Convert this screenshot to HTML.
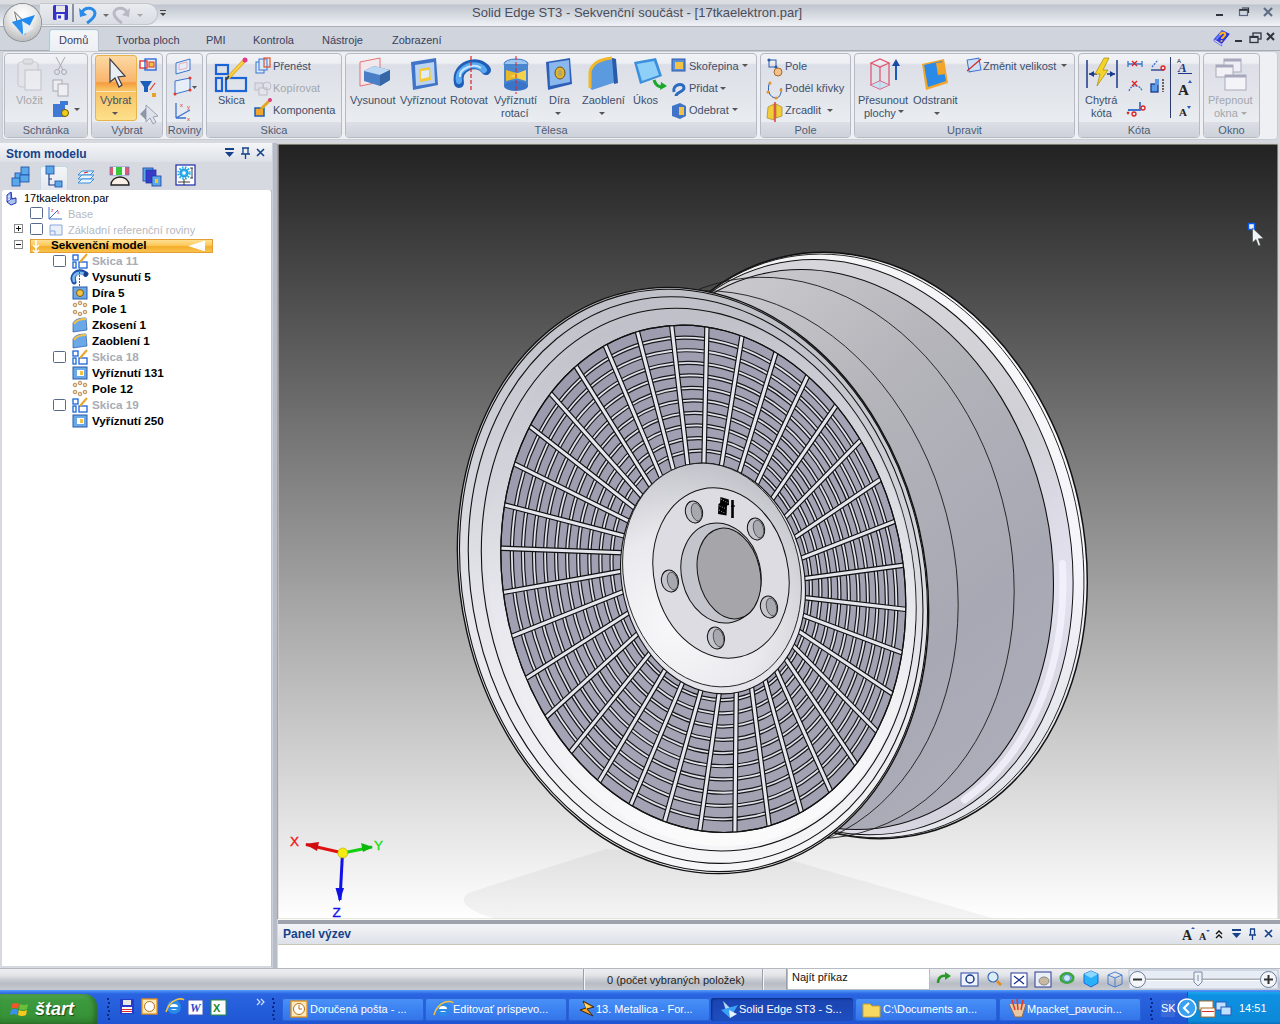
<!DOCTYPE html>
<html><head><meta charset="utf-8">
<style>
*{margin:0;padding:0;box-sizing:border-box}
html,body{width:1280px;height:1024px;overflow:hidden;background:#d4d7de;font-family:"Liberation Sans",sans-serif;font-size:11px;color:#15428b;position:relative}
.a{position:absolute}
svg{overflow:visible}
#title{left:0;top:0;width:1280px;height:27px;background:linear-gradient(#dcdde0 0,#dcdde0 4px,#bfc5ce 5px,#e6e9ee 22px,#eef0f5 25px);border-bottom:1px solid #a9adb5}
#tabs{left:0;top:27px;width:1280px;height:24px;background:#d0d4dc;border-bottom:1px solid #a8acb2}
#rib{left:2px;top:51px;width:1276px;height:89px;background:#eef0f4;border:1px solid #c9ccd2;border-radius:4px}
.grp{position:absolute;height:85px;border:1px solid #b6bac2;border-radius:4px;background:linear-gradient(#f2f3f6 0,#eceef2 11%,#dcdfe7 13%,#e3e6eb 55%,#eef1f4 100%)}
.grp .lbl{position:absolute;left:0;right:0;bottom:0;height:15px;padding-top:1px;background:linear-gradient(#dcdfe6,#cdd1d9);border-radius:0 0 3px 3px;text-align:center;color:#4e5d77;font-size:11px;line-height:15px}
.rt{position:absolute;color:#3d4f6c;font-size:11px;white-space:nowrap;line-height:14px}
.dis{color:#a3a7ae}
#left{left:0;top:140px;width:274px;height:828px;background:#d6d9e0}
#lhead{left:0;top:143px;width:272px;height:19px;background:linear-gradient(#f4f5f7,#dde1e7)}
#tree{left:2px;top:190px;width:269px;height:776px;background:#fff;border-radius:3px 3px 0 0}
.ti{position:absolute;font-size:11px;white-space:nowrap;color:#000;line-height:14px}
#vp{left:278px;top:144px;width:1000px;height:775px;background:linear-gradient(#222222,#ffffff);overflow:hidden}
#panel{left:278px;top:924px;width:1002px;height:44px;background:#fff}
#phead{left:278px;top:924px;width:1002px;height:21px;background:linear-gradient(#f4f5f8,#dde1e8);border-bottom:1px solid #c9c6b8}
#status{left:0;top:968px;width:1280px;height:22px;border-top:1px solid #b4b8c0;background:linear-gradient(#eceef2 0,#e2e4e8 30%,#c4c8cf 55%,#b8bcc4 70%,#c8cbd1 100%)}
#task{left:0;top:990px;width:1280px;height:34px;background:linear-gradient(#5a9af8 0,#3a80f0 2px,#2a64e0 4px,#245edb 50%,#1f55d2 100%)}
.tb{position:absolute;top:998px;width:142px;height:23px;border-radius:3px;background:linear-gradient(#4a92f8,#3c82f2 50%,#3474e8);color:#fff;font-size:11px;padding-left:28px;line-height:23px;white-space:nowrap;box-shadow:inset 0 0 0 1px #2a62d8}
.tb.act{background:linear-gradient(#1a44b0,#1e4ec0);box-shadow:inset 1px 1px 2px #0a2a80}
</style></head><body>
<!-- TITLE BAR -->
<div id="title" class="a"></div>
<div class="a" style="left:40px;top:3px;width:118px;height:22px;border-radius:0 11px 11px 0;background:linear-gradient(#e9ebef,#d9dde4);border:1px solid #c3c7ce;border-left:none"></div>
<svg class="a" style="left:52px;top:4px" width="120" height="20">
 <rect x="1" y="1" width="15" height="15" fill="#3434c8" rx="1.5"/><rect x="4" y="1.5" width="9" height="6.5" fill="#e8e8e8"/><rect x="4.5" y="10" width="8" height="6" fill="#f0f0f0"/><rect x="6" y="11.5" width="3" height="3" fill="#3434c8"/>
 <line x1="21" y1="0" x2="21" y2="18" stroke="#2a3a5a" stroke-width="1"/>
 <path d="M30 10 C 30 3, 42 2, 43 9 C 43 14, 38 17, 35 19" stroke="#2a8ae8" stroke-width="3" fill="none"/><polygon points="27,4 28,13 35,11" fill="#2a8ae8"/>
 <polygon points="51,10 57,10 54,13" fill="#6d6d6d"/>
 <path d="M75 10 C 75 3, 63 2, 62 9 C 62 14, 67 17, 70 19" stroke="#b9b9c4" stroke-width="3" fill="none"/><polygon points="78,4 77,13 70,11" fill="#b9b9c4"/>
 <polygon points="85,10 91,10 88,13" fill="#a8a8a8"/>
 <rect x="108" y="6" width="6" height="1" fill="#444"/><polygon points="108,9 114,9 111,12" fill="#444"/>
</svg>
<div class="a" style="left:472px;top:5px;width:340px;font-size:13px;color:#4a4d5c;white-space:nowrap;line-height:16px">Solid Edge ST3 - Sekvenční součást - [17tkaelektron.par]</div>
<svg class="a" style="left:1210px;top:4px" width="70" height="16">
 <rect x="6" y="10" width="7" height="2" fill="#2f3440"/>
 <rect x="29.5" y="5.5" width="8" height="6" fill="none" stroke="#586480" stroke-width="1.2"/><rect x="29.5" y="5" width="8" height="1.8" fill="#2f3440"/><path d="M32 4 L38.5 4 L38.5 9" stroke="#2f3440" stroke-width="1.2" fill="none"/>
 <path d="M54 4 L62 12 M62 4 L54 12" stroke="#5f6e86" stroke-width="2.2"/>
</svg>
<!-- TABS -->
<div id="tabs" class="a"></div>
<div class="a" style="left:49px;top:29px;width:50px;height:23px;border:1px solid #b8c4d0;border-bottom:none;border-radius:3px 3px 0 0;background:linear-gradient(#f6f7f9,#eceef2);box-shadow:inset 0 0 0 1px #e0f4fa"></div>
<div class="rt" style="left:59px;top:33px;color:#3b3f5e;font-size:11px">Domů</div>
<div class="rt" style="left:116px;top:33px;color:#3b3f5e;font-size:11px">Tvorba ploch</div>
<div class="rt" style="left:206px;top:33px;color:#3b3f5e;font-size:11px">PMI</div>
<div class="rt" style="left:253px;top:33px;color:#3b3f5e;font-size:11px">Kontrola</div>
<div class="rt" style="left:322px;top:33px;color:#3b3f5e;font-size:11px">Nástroje</div>
<div class="rt" style="left:392px;top:33px;color:#3b3f5e;font-size:11px">Zobrazení</div>
<div class="a" style="left:4px;top:4px;width:37px;height:37px;border-radius:50%;background:radial-gradient(circle at 50% 30%,#ffffff 0,#ececec 40%,#bdbdbd 80%,#9a9a9a 100%);box-shadow:0 0 0 1px #8d9097,0 1px 1px #c8ccd2"></div>
<svg class="a" style="left:4px;top:4px" width="37" height="37"><polygon points="10,7 20,17 13,20" fill="#5a5a5a"/><polygon points="11,9 19,17 14,19" fill="#f4f4f4"/><polygon points="8,18 31,11 21,31" fill="#1e8af0"/><polygon points="18,17 30,24 19,31" fill="#e6eef6"/><polygon points="18,17 8,18 19,31" fill="#2a90f0"/></svg>
<svg class="a" style="left:1212px;top:29px" width="68" height="18">
 <polygon points="2,10 10,1 18,5 10,15" fill="#2a36d8"/><polygon points="2,10 10,15 10,17 2,12" fill="#e8ecff" stroke="#3a48e0" stroke-width="0.7"/><polygon points="10,15 18,5 18,7 10,17" fill="#c8d0ff"/><polygon points="3,10 10,2 12,3 5,11" fill="#6a7af8"/><path d="M8 6 C 9 3, 14 3, 13 6 C 12 8, 10 8, 10 10" stroke="#ffb020" stroke-width="2.2" fill="none"/><circle cx="9.5" cy="12" r="1.1" fill="#ffb020"/>
 <rect x="23" y="11" width="7" height="2" fill="#2f3440"/>
 <rect x="41" y="4" width="8" height="6" fill="none" stroke="#2f3440" stroke-width="1.3"/><rect x="38" y="7.5" width="8" height="6" fill="#d0d4dc" stroke="#2f3440" stroke-width="1.3"/><rect x="38" y="7.5" width="8" height="1.5" fill="#2f3440"/>
 <path d="M55 4 L62 11 M62 4 L55 11" stroke="#2f3440" stroke-width="2"/>
</svg>
<!-- RIBBON -->
<div id="rib" class="a"></div>
<div class="grp" style="left:4px;top:53px;width:84px"><div class="lbl">Schránka</div></div>
<div class="grp" style="left:91px;top:53px;width:72px"><div class="lbl">Vybrat</div></div>
<div class="grp" style="left:166px;top:53px;width:37px"><div class="lbl">Roviny</div></div>
<div class="grp" style="left:206px;top:53px;width:136px"><div class="lbl">Skica</div></div>
<div class="grp" style="left:345px;top:53px;width:412px"><div class="lbl">Tělesa</div></div>
<div class="grp" style="left:760px;top:53px;width:91px"><div class="lbl">Pole</div></div>
<div class="grp" style="left:854px;top:53px;width:221px"><div class="lbl">Upravit</div></div>
<div class="grp" style="left:1078px;top:53px;width:122px"><div class="lbl">Kóta</div></div>
<div class="grp" style="left:1203px;top:53px;width:57px"><div class="lbl">Okno</div></div>
<!-- Vybrat highlighted button -->
<div class="a" style="left:95px;top:55px;width:42px;height:66px;border:1px solid #e8b44a;border-radius:3px;background:linear-gradient(#fcd9a4 0,#f9b56c 40%,#f59b3c 42%,#f8c060 52%,#fde08c 100%)"></div>
<div class="a" style="left:96px;top:91px;width:40px;height:1px;background:#fde6c0"></div>
<svg class="a" style="left:0;top:50px" width="1280" height="75">
 <!-- Schranka -->
 <g opacity="0.55"><rect x="18" y="12" width="20" height="25" rx="3" fill="#e6e6ea" stroke="#b2b2ba"/><rect x="23" y="9" width="10" height="5" rx="2" fill="#d0d0d6" stroke="#a9a9b0"/><rect x="25" y="20" width="16" height="20" fill="#f4f4f6" stroke="#a9a9b0"/></g>
 <g stroke="#9a9aa6" fill="none" opacity="0.8"><circle cx="57" cy="22" r="2.5"/><circle cx="64" cy="22" r="2.5"/><path d="M56 7 L63 20 M65 7 L58 20"/></g>
 <g stroke="#a4a4ae" fill="#f0f0f4" opacity="0.9"><rect x="53" y="30" width="9" height="11"/><rect x="58" y="34" width="10" height="12"/></g>
 <rect x="53" y="54" width="12" height="13" fill="#3f79d6"/><rect x="60" y="51" width="8" height="4" fill="#3f79d6"/><circle cx="65" cy="63" r="3.5" fill="#f1cd1b" stroke="#6f5a00"/>
 <polygon points="74,58 80,58 77,61" fill="#555"/>
 <!-- Vybrat -->
 <path d="M110 9 L110 32 L115 28 L119 37 L122 35 L118 27 L125 26 Z" fill="#e9eef2" stroke="#3d3d48" stroke-width="1.2"/>
 <polygon points="112,62 118,62 115,65" fill="#555"/>
 <rect x="140" y="11" width="7" height="7" fill="#fff" stroke="#e23a2a" stroke-width="1.4"/><rect x="145" y="9" width="11" height="11" fill="none" stroke="#2460d8" stroke-width="1.3"/><rect x="149" y="12" width="5" height="5" fill="#f3c244" stroke="#e23a2a"/>
 <path d="M140 31 L152 31 L148 37 L148 42 L144 42 L144 37 Z" fill="#1a5fb8"/><path d="M150 40 L155 33" stroke="#e23a2a" stroke-width="1.2"/><rect x="152" y="43" width="4" height="4" fill="#e8a028"/>
 <path d="M146 55 L146 72 L150 68 L153 74 L156 72 L153 67 L158 66 Z" fill="#dfe2ea" stroke="#9aa0b0"/><path d="M140 64 L146 58 L146 70 Z" fill="#8c96a8"/>
 <!-- Roviny -->
 <polygon points="176,13 190,9 190,20 176,24" fill="#e6eefa" stroke="#3a74d0"/><polygon points="179,14 187,12 187,18 179,20" fill="none" stroke="#e6a0a8" stroke-width="0.8"/>
 <polygon points="175,31 190,28 190,40 175,44" fill="#e6eefa" stroke="#3a74d0"/><circle cx="175" cy="44" r="1.5" fill="#e23a2a"/><circle cx="190" cy="28" r="1.5" fill="#e23a2a"/><circle cx="190" cy="40" r="1.5" fill="#e23a2a"/><polygon points="192,36 197,36 194.5,39" fill="#555"/>
 <path d="M176 68 L176 53 M176 68 L190 60 M176 68 L186 68" stroke="#3a74d0" stroke-width="1.3" fill="none"/><text x="180" y="57" font-size="6" fill="#d23a2a">x</text><text x="187" y="71" font-size="6" fill="#d23a2a">x</text><text x="187" y="59" font-size="6" fill="#d23a2a">y</text>
 <!-- Skica -->
 <g stroke="#1a64d8" stroke-width="2.2" fill="none"><rect x="216" y="15" width="12" height="9"/><rect x="216" y="28" width="6" height="13"/><rect x="226" y="28" width="20" height="13"/></g>
 <path d="M228 28 L244 11" stroke="#e2a81e" stroke-width="4"/><path d="M228 28 L244 11" stroke="#f7d34a" stroke-width="2"/><circle cx="245" cy="10" r="2.5" fill="#e23a8a"/><path d="M226 30 L229 26" stroke="#333" stroke-width="1.5"/>
 <g fill="#dbe8f8" stroke="#3a74d0"><rect x="256" y="12" width="8" height="11"/><rect x="259" y="9" width="8" height="11"/></g><rect x="264" y="8" width="6" height="9" fill="none" stroke="#e0502a" stroke-width="1.2"/>
 <g opacity="0.45"><rect x="255" y="33" width="8" height="7" fill="#d8d8de" stroke="#9090a0"/><rect x="259" y="38" width="8" height="7" fill="#e8e8ee" stroke="#9090a0"/><circle cx="267" cy="36" r="4" fill="none" stroke="#9090a0"/></g>
 <rect x="255" y="58" width="9" height="8" fill="#f3a72a" stroke="#1a5fb8" stroke-width="1.5"/><path d="M261 59 L270 50" stroke="#e2a81e" stroke-width="3"/><circle cx="270" cy="50" r="2" fill="#e23a8a"/>
 <!-- Telesa -->
 <polygon points="360,12 380,8 380,32 360,36" fill="#f4e8ec" stroke="#e0454a" stroke-width="0.8" opacity="0.9"/>
 <polygon points="364,21 374,16 390,20 390,30 380,36 364,31" fill="#4a7fc8"/><polygon points="364,21 374,16 390,20 380,25" fill="#bcd8f4"/><polygon points="380,25 390,20 390,30 380,36" fill="#3466a8"/>
 <polygon points="411,12 436,8 438,35 413,40" fill="#3f74c8"/><polygon points="415,15 434,12 435,33 416,36" fill="#bcd4f0"/><polygon points="419,19 430,17 431,30 420,32" fill="#f5c93a"/><polygon points="421,21 429,20 429,27 421,29" fill="#e2ecf8"/>
 <path d="M459 33 C 455 16, 478 8, 486 20" stroke="#1f5fb8" stroke-width="10" fill="none" stroke-linecap="round"/><path d="M459 31 C 456 17, 477 10, 484 20" stroke="#5aa8f0" stroke-width="6" fill="none" stroke-linecap="round"/><path d="M460 27 C 459 18, 474 13, 481 18" stroke="#c8e6fc" stroke-width="2" fill="none"/><line x1="471" y1="6" x2="471" y2="42" stroke="#e02020" stroke-width="1.2" stroke-dasharray="4,2"/>
 <polygon points="555,62 561,62 558,65" fill="#555"/><polygon points="599,62 605,62 602,65" fill="#555"/>
 <ellipse cx="516" cy="14" rx="12" ry="5" fill="#9cc6ee" stroke="#3a74c8"/><rect x="504" y="14" width="24" height="22" fill="#4a86d0"/><ellipse cx="516" cy="36" rx="12" ry="5" fill="#3a74c8"/><polygon points="506,20 526,26 506,31" fill="#e8b82a"/><polygon points="526,20 510,26 526,31" fill="#f6d24a"/><line x1="516" y1="6" x2="516" y2="44" stroke="#e02020" stroke-dasharray="4,2"/>
 <polygon points="546,12 570,8 572,34 548,40" fill="#2e5fb8"/><polygon points="549,13 569,10 570,32 550,36" fill="#8ab8ec"/><ellipse cx="560" cy="23" rx="5" ry="6" fill="#e8b82a" stroke="#6b5212"/><ellipse cx="560" cy="23" rx="2.5" ry="3.5" fill="#bca85a"/>
 <path d="M590 38 L590 22 C 592 12, 602 9, 612 8 L 614 8 L 616 32 L 592 40 Z" fill="#5c9ae0"/><path d="M590 38 L590 22 C 592 12, 602 9, 612 8" stroke="#f2b82a" stroke-width="3" fill="none"/><polygon points="612,8 616,9 618,33 614,34" fill="#2a5aa8"/>
 <polygon points="634,12 656,8 662,26 640,34" fill="#3a90dc"/><polygon points="637,14 654,11 659,25 642,31" fill="#8fd0f8"/><path d="M654 30 C 656 36, 660 38, 664 36" stroke="#1aa82a" stroke-width="3" fill="none"/><polygon points="661,32 667,36 660,40" fill="#1aa82a"/>
 <rect x="672" y="9" width="13" height="12" fill="#5a8fd8" stroke="#2a5aa8"/><rect x="675" y="12" width="8" height="7" fill="#f3c244"/>
 <polygon points="742,14 748,14 745,17" fill="#555"/>
 <path d="M674 42 C 672 34, 684 32, 684 38 C 684 42, 676 42, 676 46" stroke="#2a6ac0" stroke-width="3" fill="none"/>
 <polygon points="720,37 726,37 723,40" fill="#555"/>
 <polygon points="672,56 680,53 686,56 686,66 680,69 672,66" fill="#3f74c8"/><rect x="679" y="57" width="5" height="8" fill="#f3c244"/>
 <polygon points="732,58 738,58 735,61" fill="#555"/>
 <!-- Pole -->
 <g fill="none" stroke="#2a5aa8"><rect x="769" y="10" width="7" height="7"/></g><circle cx="769" cy="10" r="1.6" fill="#2a5aa8"/><circle cx="776" cy="17" r="1.6" fill="#2a5aa8"/><circle cx="778" cy="22" r="4" fill="#f3c28a" stroke="#a86a2a"/>
 <path d="M770 32 C 766 40, 770 48, 776 48 C 780 48, 782 42, 781 38" stroke="#2a5aa8" fill="none"/><circle cx="770" cy="33" r="1.5" fill="#e8902a"/><circle cx="768" cy="42" r="1.5" fill="#e8902a"/><circle cx="776" cy="48" r="1.5" fill="#e8902a"/><circle cx="781" cy="40" r="1.5" fill="#e8902a"/>
 <path d="M774 54 L768 57 L767 68 L774 70 Z" fill="#f1cd3a" stroke="#9a7a10" stroke-width="0.6"/><path d="M776 54 L782 57 L782 66 L776 68 Z" fill="#f1cd3a" stroke="#9a7a10" stroke-width="0.6"/><line x1="775" y1="52" x2="775" y2="72" stroke="#e02020" stroke-width="1.3"/>
 <polygon points="827,59 833,59 830,62" fill="#555"/>
 <!-- Upravit -->
 <g stroke="#e0506a" fill="none" stroke-width="1.2"><polygon points="871,13 880,9 889,13 880,17"/><polygon points="871,35 880,31 889,35 880,39"/><line x1="871" y1="13" x2="871" y2="35"/><line x1="889" y1="13" x2="889" y2="35"/><line x1="880" y1="17" x2="880" y2="39"/></g><polygon points="871,35 880,31 889,35 880,39" fill="#bfe4f8" opacity="0.8"/>
 <line x1="896" y1="30" x2="896" y2="14" stroke="#1a5ab8" stroke-width="2"/><polygon points="892,16 900,16 896,9" fill="#1a4aa8"/>
 <polygon points="898,60 904,60 901,63" fill="#555"/>
 <polygon points="922,14 944,9 948,33 926,40" fill="#f3a52a"/><polygon points="924,15 942,11 946,31 928,37" fill="#2a8ae8"/><polygon points="936,13 944,12 946,24 938,25" fill="#f3a52a"/>
 <polygon points="934,62 940,62 937,65" fill="#555"/>
 <rect x="968" y="9" width="12" height="12" fill="#cfe0f6" stroke="#3a74d0" transform="rotate(-10 974 15)"/><path d="M967 21 L981 9" stroke="#d02a2a" stroke-width="1.2"/>
 <polygon points="1061,14 1067,14 1064,17" fill="#555"/>
 <!-- Kota -->
 <line x1="1087" y1="10" x2="1087" y2="38" stroke="#1a3a88" stroke-width="1.5"/><line x1="1117" y1="10" x2="1117" y2="38" stroke="#1a3a88" stroke-width="1.5"/><path d="M1089 24 L1097 24 M1107 24 L1115 24" stroke="#1a3a88" stroke-width="1.5"/><polygon points="1089,24 1094,21 1094,27" fill="#1a3a88"/><polygon points="1115,24 1110,21 1110,27" fill="#1a3a88"/>
 <polygon points="1104,8 1109,8 1103,20 1108,20 1097,36 1100,24 1095,24" fill="#f3d22a" stroke="#a88a10" stroke-width="0.7"/>
 <g stroke-width="1.3" fill="none"><path d="M1128 11 L1128 17 M1142 11 L1142 17 M1128 14 L1142 14" stroke="#3a74d0"/><path d="M1132 11 L1137 16 M1137 11 L1132 16" stroke="#e02020"/>
 <path d="M1151 20 L1164 20" stroke="#1a3a88"/><path d="M1152 17 L1158 10" stroke="#3a74d0" stroke-dasharray="2,1"/><circle cx="1163" cy="18" r="2" stroke="#e02020"/>
 <path d="M1129 41 C 1131 34, 1140 34, 1142 41" stroke="#3a74d0" stroke-dasharray="2,1"/><path d="M1132 31 L1137 36 M1137 31 L1132 36" stroke="#e02020"/>
 <rect x="1151" y="34" width="7" height="8" fill="#5a9ae8" stroke="#1a3a88"/><rect x="1155" y="29" width="4" height="6" fill="#5a9ae8"/><path d="M1163 29 L1163 42" stroke="#222" stroke-dasharray="2,1"/>
 <path d="M1128 60 L1140 60 L1140 52" stroke="#3a74d0" stroke-width="1.8"/><circle cx="1143" cy="58" r="2" stroke="#e02020"/><circle cx="1134" cy="64" r="2" stroke="#e02020"/><path d="M1127 62 L1129 64 M1129 62 L1127 64" stroke="#e02020"/></g>
 <line x1="1170.5" y1="7" x2="1170.5" y2="68" stroke="#2a3a6a" stroke-width="1"/>
 <text x="1178" y="22" font-family="Liberation Serif" font-weight="bold" font-style="italic" font-size="13" fill="#1a3a88">A</text><text x="1177" y="13" font-size="6" fill="#111">A</text><line x1="1178" y1="23.5" x2="1192" y2="23.5" stroke="#1a3a88"/>
 <text x="1178" y="45" font-family="Liberation Serif" font-weight="bold" font-size="15" fill="#222">A</text><polygon points="1188,33 1192,33 1190,30" fill="#2a5ab8"/>
 <text x="1179" y="66" font-family="Liberation Serif" font-weight="bold" font-size="11" fill="#222">A</text><polygon points="1187,56 1191,56 1189,59" fill="#2a5ab8"/>
 <!-- Okno -->
 <g><rect x="1224" y="9" width="17" height="13" fill="#eeeef4" stroke="#aaaabc"/><rect x="1224" y="9" width="17" height="2.5" fill="#a8a8bc"/><rect x="1216" y="15" width="17" height="12" fill="#f2f2f6" stroke="#aaaabc"/><rect x="1216" y="15" width="17" height="2.5" fill="#a8a8bc"/><rect x="1225" y="25" width="21" height="15" fill="#f4f4f8" stroke="#aaaabc"/><rect x="1225" y="25" width="21" height="2.5" fill="#a8a8bc"/></g>
 <polygon points="1241,62 1247,62 1244,65" fill="#aaa"/>
</svg>
<div class="rt dis" style="left:16px;top:93px;font-size:11px">Vložit</div>
<div class="rt" style="left:100px;top:93px;font-size:11px">Vybrat</div>
<div class="rt" style="left:218px;top:93px;font-size:11px">Skica</div>
<div class="rt" style="left:273px;top:59px;font-size:11px">Přenést</div>
<div class="rt dis" style="left:273px;top:81px;font-size:11px">Kopírovat</div>
<div class="rt" style="left:273px;top:103px;font-size:11px">Komponenta</div>
<div class="rt" style="left:350px;top:93px;font-size:11px">Vysunout</div>
<div class="rt" style="left:400px;top:93px;font-size:11px">Vyříznout</div>
<div class="rt" style="left:450px;top:93px;font-size:11px">Rotovat</div>
<div class="rt" style="left:494px;top:93px">Vyříznutí</div><div class="rt" style="left:501px;top:106px">rotací</div>
<div class="rt" style="left:549px;top:93px;font-size:11px">Díra</div>
<div class="rt" style="left:582px;top:93px;font-size:11px">Zaoblení</div>
<div class="rt" style="left:633px;top:93px;font-size:11px">Úkos</div>
<div class="rt" style="left:689px;top:59px;font-size:11px">Skořepina</div>
<div class="rt" style="left:689px;top:81px;font-size:11px">Přidat</div>
<div class="rt" style="left:689px;top:103px;font-size:11px">Odebrat</div>
<div class="rt" style="left:785px;top:59px;font-size:11px">Pole</div>
<div class="rt" style="left:785px;top:81px;font-size:11px">Podél křivky</div>
<div class="rt" style="left:785px;top:103px;font-size:11px">Zrcadlit</div>
<div class="rt" style="left:858px;top:93px">Přesunout</div><div class="rt" style="left:864px;top:106px">plochy</div>
<div class="rt" style="left:913px;top:93px;font-size:11px">Odstranit</div>
<div class="rt" style="left:983px;top:59px;font-size:11px">Změnit velikost</div>
<div class="rt" style="left:1085px;top:93px">Chytrá</div><div class="rt" style="left:1091px;top:106px">kóta</div>
<div class="rt dis" style="left:1208px;top:93px">Přepnout</div><div class="rt dis" style="left:1214px;top:106px">okna</div>
<!-- LEFT PANEL -->
<div id="left" class="a"></div>
<div id="lhead" class="a"></div>
<div class="a" style="left:6px;top:147px;font-size:12px;font-weight:bold;color:#15428b;white-space:nowrap">Strom modelu</div>
<svg class="a" style="left:220px;top:146px" width="50" height="16">
 <rect x="5" y="2" width="9" height="2" fill="#15428b"/><polygon points="5,6 14,6 9.5,11" fill="#15428b"/>
 <path d="M22 2 L29 2 M23 2 L23 8 M28 2 L28 8 M21 8 L30 8 M25.5 8 L25.5 13" stroke="#15428b" stroke-width="1.3" fill="none"/>
 <path d="M37 3 L44 10 M44 3 L37 10" stroke="#15428b" stroke-width="1.6"/>
</svg>
<div class="a" style="left:40px;top:166px;width:28px;height:25px;border:1px solid #c4d8e6;border-bottom:none;border-radius:3px 3px 0 0;background:linear-gradient(#f3f5f8,#e2e6ec)"></div>
<svg class="a" style="left:0;top:162px" width="210" height="28">
 <g fill="#5aa8e8" stroke="#1a4aa8" stroke-width="0.8"><rect x="15" y="11" width="8" height="8"/><rect x="21" y="5" width="8" height="8"/><rect x="12" y="16" width="8" height="8"/><rect x="20" y="13" width="9" height="7"/></g>
 <rect x="46" y="4" width="8" height="8" fill="#5aa8e8" stroke="#1a4aa8" stroke-width="0.8"/><path d="M49 12 L49 23 L56 23 M49 17 L52 17" stroke="#1a3a88" stroke-width="1.2" fill="none"/><rect x="55" y="19" width="7" height="6" fill="#5aa8e8" stroke="#1a4aa8" stroke-width="0.8"/>
 <g fill="#eaf4fc" stroke="#3a90dc"><polygon points="78,13 90,13 94,9 82,9"/><polygon points="78,17 90,17 94,13 82,13"/><polygon points="78,21 90,21 94,17 82,17"/></g><path d="M84 11 L88 10" stroke="#e02020"/>
 <rect x="110" y="5" width="19" height="8" fill="#e8566a" stroke="#3a74c8" stroke-width="0.6"/><rect x="116" y="5" width="6" height="8" fill="#38c838"/><rect x="113" y="5" width="3" height="8" fill="#f4f4f4"/><rect x="122" y="5" width="3" height="8" fill="#f4f4f4"/><path d="M111 23 A 9 8 0 0 1 129 23 Z" fill="#fbf0e8" stroke="#222" stroke-width="1.3"/>
 <g fill="#5aa8e8" stroke="#1a3aa8" stroke-width="0.8"><rect x="143" y="6" width="10" height="13"/><rect x="146" y="8" width="10" height="13" fill="#3a3ac8"/><rect x="152" y="14" width="9" height="10" fill="#5aa8e8"/></g><rect x="155" y="17" width="3" height="4" fill="#f3c244"/>
 <rect x="176" y="3" width="19" height="20" fill="#fff" stroke="#1a2aa8" stroke-width="1.2"/><circle cx="184" cy="11" r="5.5" fill="none" stroke="#26b4f0" stroke-width="2.5" stroke-dasharray="1.6,1.3"/><circle cx="184" cy="11" r="4" fill="#26b4f0" stroke="#1a6ac8" stroke-width="0.6"/><circle cx="184" cy="11" r="1.8" fill="#fff"/><path d="M184 17 L184 23 M178 20 L190 20 M192 6 L192 16 M190 6 L193 6 M190 16 L193 16" stroke="#111" stroke-width="0.8"/>
</svg>
<div id="tree" class="a"></div>
<svg class="a" style="left:0;top:190px" width="220" height="240">
 <!-- root icon -->
 <path d="M7 5 L11 2 L12 9 L16 8 L16 13 L11 15 L7 12 Z" fill="#a8c4ee" stroke="#2a3ab8" stroke-width="1"/><path d="M11 2 L11 9 L7 12 M11 9 L16 8" stroke="#2a3ab8" stroke-width="0.8" fill="none"/><path d="M8 7 L10 6 M8 10 L10 9" stroke="#fff" stroke-width="0.8"/>
 <!-- Base row y 23 -->
 <rect x="30.5" y="17.5" width="12" height="11" fill="#fff" stroke="#5a6a8a" rx="1"/>
 <path d="M49 29 L49 17 M49 29 L62 29 M49 29 L58 20" stroke="#3a74d0" stroke-width="1" fill="none"/><text x="51" y="22" font-size="5" fill="#d02a6a">z</text><text x="57" y="24" font-size="5" fill="#d02a6a">x</text>
 <!-- Zakladni y 39 -->
 <rect x="14.5" y="34.5" width="8" height="8" fill="#fff" stroke="#8a8a8a"/><path d="M16 38.5 L21 38.5 M18.5 36 L18.5 41" stroke="#111"/>
 <rect x="30.5" y="33.5" width="12" height="11" fill="#fff" stroke="#5a6a8a" rx="1"/>
 <path d="M50 35 L62 35 L62 45 L50 45 Z" fill="#eaf0fa" stroke="#88a8d8"/><path d="M50 41 L55 41 L55 45" stroke="#88a8d8" fill="none"/>
 <!-- Sekvencni y 55 -->
 <rect x="14.5" y="50.5" width="8" height="8" fill="#fff" stroke="#8a8a8a"/><path d="M16 54.5 L21 54.5" stroke="#111"/>
</svg>
<div class="a" style="left:30px;top:239px;width:183px;height:14px;background:linear-gradient(#ffdf93 0,#fcc95a 45%,#f5ad2c 55%,#f8c24c 100%);border:1px solid #e4a037"></div>
<svg class="a" style="left:0;top:190px" width="220" height="240">
 <path d="M36 50 L36 63 M33 55 L36 58 L39 55 M33 60 L36 63 L39 60" stroke="#fff" stroke-width="1.5" fill="none"/>
 <polygon points="188,56 204,51 204,61" fill="#fff"/><rect x="203" y="51" width="2" height="10" fill="#fff"/>
 <!-- children icons -->
 <g id="chk"><rect x="53.5" y="65.5" width="12" height="11" fill="#fff" stroke="#5a6a8a" rx="1"/></g>
 <g><rect x="73" y="65" width="5" height="5" fill="none" stroke="#1a64d8" stroke-width="1.3"/><rect x="73" y="72" width="3" height="6" fill="none" stroke="#1a64d8" stroke-width="1.3"/><rect x="79" y="72" width="8" height="6" fill="none" stroke="#1a64d8" stroke-width="1.3"/><path d="M80 72 L87 64" stroke="#e8a82a" stroke-width="2"/></g>
 <path d="M74 92 C 71 86, 76 81, 82 82 L 86 84" stroke="#1f4fa8" stroke-width="5" fill="none" stroke-linecap="round"/><path d="M74 91 C 72 86, 76 82, 82 83 L 85 84.5" stroke="#7ab8f0" stroke-width="2.6" fill="none" stroke-linecap="round"/><ellipse cx="85.5" cy="84.5" rx="2" ry="2.6" fill="#1a3a88"/><line x1="79.5" y1="79" x2="79.5" y2="96" stroke="#e02020" stroke-dasharray="2,1"/>
 <rect x="73" y="97" width="14" height="12" fill="#6aa8e8" stroke="#2a5aa8"/><circle cx="80" cy="103" r="3.5" fill="#f3c244" stroke="#7a5a10"/>
 <g fill="#f3d8b8" stroke="#9a6a2a" stroke-width="0.7"><circle cx="75" cy="115" r="1.8"/><circle cx="80" cy="113" r="1.8"/><circle cx="85" cy="115" r="1.8"/><circle cx="75" cy="122" r="1.8"/><circle cx="80" cy="124" r="1.8"/><circle cx="85" cy="122" r="1.8"/></g>
 <path d="M73 142 L73 133 C 75 129, 80 128, 86 128 L87 140 Z" fill="#6aa8e8" stroke="#2a5aa8" stroke-width="0.7"/><path d="M74 134 C 76 130, 80 129, 86 129" stroke="#f3c244" stroke-width="2" fill="none"/>
 <path d="M73 158 L73 149 C 75 145, 80 144, 86 144 L87 156 Z" fill="#6aa8e8" stroke="#2a5aa8" stroke-width="0.7"/><path d="M74 150 C 76 146, 80 145, 86 145" stroke="#f3c244" stroke-width="2" fill="none"/>
 <rect x="53.5" y="161.5" width="12" height="11" fill="#fff" stroke="#5a6a8a" rx="1"/>
 <g><rect x="73" y="161" width="5" height="5" fill="none" stroke="#1a64d8" stroke-width="1.3"/><rect x="73" y="168" width="3" height="6" fill="none" stroke="#1a64d8" stroke-width="1.3"/><rect x="79" y="168" width="8" height="6" fill="none" stroke="#1a64d8" stroke-width="1.3"/><path d="M80 168 L87 160" stroke="#e8a82a" stroke-width="2"/></g>
 <rect x="73" y="177" width="14" height="12" fill="#6aa8e8" stroke="#2a5aa8"/><rect x="77" y="180" width="7" height="6" fill="#fff"/><rect x="80" y="181" width="3" height="4" fill="#f3c244"/>
 <g fill="#f3d8b8" stroke="#9a6a2a" stroke-width="0.7"><circle cx="75" cy="195" r="1.8"/><circle cx="80" cy="193" r="1.8"/><circle cx="85" cy="195" r="1.8"/><circle cx="75" cy="202" r="1.8"/><circle cx="80" cy="204" r="1.8"/><circle cx="85" cy="202" r="1.8"/></g>
 <rect x="53.5" y="209.5" width="12" height="11" fill="#fff" stroke="#5a6a8a" rx="1"/>
 <g><rect x="73" y="209" width="5" height="5" fill="none" stroke="#1a64d8" stroke-width="1.3"/><rect x="73" y="216" width="3" height="6" fill="none" stroke="#1a64d8" stroke-width="1.3"/><rect x="79" y="216" width="8" height="6" fill="none" stroke="#1a64d8" stroke-width="1.3"/><path d="M80 216 L87 208" stroke="#e8a82a" stroke-width="2"/></g>
 <rect x="73" y="225" width="14" height="12" fill="#6aa8e8" stroke="#2a5aa8"/><rect x="77" y="228" width="7" height="6" fill="#fff"/><rect x="80" y="229" width="3" height="4" fill="#f3c244"/>
</svg>
<div class="ti" style="left:24px;top:191px">17tkaelektron.par</div>
<div class="ti" style="left:68px;top:207px;color:#b4b8c0">Base</div>
<div class="ti" style="left:68px;top:223px;color:#b4b8c0">Základní referenční roviny</div>
<div class="ti" style="left:51px;top:238px;font-weight:bold;font-size:11.7px">Sekvenční model</div>
<div class="ti" style="left:92px;top:254px;font-weight:bold;font-size:11.7px;color:#a8acb4">Skica 11</div>
<div class="ti" style="left:92px;top:270px;font-weight:bold;font-size:11.7px">Vysunutí 5</div>
<div class="ti" style="left:92px;top:286px;font-weight:bold;font-size:11.7px">Díra 5</div>
<div class="ti" style="left:92px;top:302px;font-weight:bold;font-size:11.7px">Pole 1</div>
<div class="ti" style="left:92px;top:318px;font-weight:bold;font-size:11.7px">Zkosení 1</div>
<div class="ti" style="left:92px;top:334px;font-weight:bold;font-size:11.7px">Zaoblení 1</div>
<div class="ti" style="left:92px;top:350px;font-weight:bold;font-size:11.7px;color:#a8acb4">Skica 18</div>
<div class="ti" style="left:92px;top:366px;font-weight:bold;font-size:11.7px">Vyříznutí 131</div>
<div class="ti" style="left:92px;top:382px;font-weight:bold;font-size:11.7px">Pole 12</div>
<div class="ti" style="left:92px;top:398px;font-weight:bold;font-size:11.7px;color:#a8acb4">Skica 19</div>
<div class="ti" style="left:92px;top:414px;font-weight:bold;font-size:11.7px">Vyříznutí 250</div>
<svg class="a" style="left:0;top:0" width="1280" height="1024" viewBox="0 0 1280 1024">
<defs>
<linearGradient id="bg" x1="0" y1="144" x2="0" y2="919" gradientUnits="userSpaceOnUse"><stop offset="0" stop-color="#222"/><stop offset="1" stop-color="#fff"/></linearGradient>
<linearGradient id="barrel" x1="700" y1="250" x2="1000" y2="850" gradientUnits="userSpaceOnUse"><stop offset="0" stop-color="#d0d0d4"/><stop offset="0.35" stop-color="#b4b4ba"/><stop offset="0.7" stop-color="#a8a8b4"/><stop offset="1" stop-color="#b0b0bc"/></linearGradient>
<linearGradient id="flange" x1="800" y1="250" x2="1080" y2="800" gradientUnits="userSpaceOnUse"><stop offset="0" stop-color="#f4f4f6"/><stop offset="0.5" stop-color="#f8f8fa"/><stop offset="0.75" stop-color="#f4f4fa"/><stop offset="1" stop-color="#dcdce4"/></linearGradient>
<linearGradient id="flange2" x1="800" y1="250" x2="1080" y2="800" gradientUnits="userSpaceOnUse"><stop offset="0" stop-color="#d8d8dc"/><stop offset="0.5" stop-color="#d0d0d6"/><stop offset="0.75" stop-color="#e4e2f0"/><stop offset="1" stop-color="#c8c8d0"/></linearGradient>
<linearGradient id="face" x1="780" y1="330" x2="600" y2="840" gradientUnits="userSpaceOnUse"><stop offset="0" stop-color="#c0c0c8"/><stop offset="0.35" stop-color="#d4d4dc"/><stop offset="0.6" stop-color="#e6e6ec"/><stop offset="1" stop-color="#f6f6f8"/></linearGradient>
<linearGradient id="cells" x1="500" y1="330" x2="900" y2="830" gradientUnits="userSpaceOnUse"><stop offset="0" stop-color="#9898aa"/><stop offset="0.5" stop-color="#a4a4b6"/><stop offset="1" stop-color="#a0a0b0"/></linearGradient>
<radialGradient id="hub" cx="665" cy="615" r="160" gradientUnits="userSpaceOnUse"><stop offset="0" stop-color="#f8f8fa"/><stop offset="0.55" stop-color="#eaeaee"/><stop offset="1" stop-color="#c4c4cc"/></radialGradient>
<linearGradient id="lipsh" x1="0" y1="320" x2="0" y2="840" gradientUnits="userSpaceOnUse"><stop offset="0" stop-color="#c0c0ca" stop-opacity="0.6"/><stop offset="0.45" stop-color="#e8e8ee" stop-opacity="0.5"/><stop offset="1" stop-color="#ffffff" stop-opacity="0.6"/></linearGradient>
<clipPath id="vpc"><rect x="278" y="144" width="1000" height="775"/></clipPath>
</defs>
<g clip-path="url(#vpc)">
<rect x="278" y="144" width="1000" height="775" fill="url(#bg)"/>
<path d="M496 919 Q452 906 468 893 L606 849 L790 860 L996 919 Z" fill="#000" opacity="0.045"/>
<ellipse cx="851.7" cy="545.5" rx="230.9" ry="296.8" transform="rotate(-14.50 851.7 545.5)" fill="url(#flange)" stroke="#111" stroke-width="1.5"/>
<ellipse cx="849.4" cy="545.9" rx="229.9" ry="295.5" transform="rotate(-14.50 849.4 545.9)" fill="none" stroke="#222" stroke-width="0.9"/>
<ellipse cx="842.0" cy="547.2" rx="226.5" ry="291.2" transform="rotate(-14.50 842.0 547.2)" fill="url(#flange2)" stroke="#111" stroke-width="1"/>
<ellipse cx="828.5" cy="549.5" rx="220.5" ry="283.5" transform="rotate(-14.50 828.5 549.5)" fill="url(#barrel)" stroke="#111" stroke-width="1.1"/>
<path d="M1062.4 563.4 L1062.6 567.8 L1062.8 572.2 L1062.9 576.7 L1062.9 581.1 L1062.9 585.5 L1062.9 589.9 L1062.7 594.3 L1062.6 598.7 L1062.3 603.1 L1062.1 607.5 L1061.7 611.8 L1061.3 616.2 L1060.9 620.5 L1060.4 624.8 L1059.8 629.1 L1059.2 633.3 L1058.5 637.6 L1057.8 641.8 L1057.0 646.0 L1056.2 650.2 L1055.3 654.3 L1054.3 658.4 L1053.3 662.5 L1052.3 666.6 L1051.1 670.6 L1050.0 674.6 L1048.8 678.6 L1047.5 682.5 L1046.2 686.4 L1044.8 690.3 L1043.4 694.2 L1041.9 698.0 L1040.4 701.7 L1038.8 705.5 L1037.2 709.1 L1035.5 712.8 L1033.8 716.4 L1032.0 720.0 L1030.2 723.5 L1028.3 727.0 L1026.4 730.4 L1024.4 733.8 L1022.4 737.2 L1020.3 740.5 L1018.2 743.7 L1016.1 746.9 L1013.9 750.1 L1011.6 753.2 L1009.3 756.3 L1007.0 759.3 L1004.6 762.2 L1002.2 765.1 L999.8 768.0 L997.3 770.8 L994.7 773.5 L992.2 776.2 L989.5 778.8 L986.9 781.4 L984.2 783.9 L981.5 786.3 L978.7 788.7 L975.9 791.1 L973.1 793.3 L970.2 795.6 L967.3 797.7 L964.4 799.8" stroke="#f6f4ff" stroke-width="7" fill="none" opacity="0.75" stroke-linecap="round"/>
<path d="M650.9 317.5 L662.9 308.5 L675.4 300.6 L688.4 293.8 L701.9 288.1 L715.7 283.7 L729.8 280.3 L744.2 278.2 L758.8 277.3 L773.5 277.6 L788.3 279.2 L803.1 281.9 L817.8 285.8 L832.4 290.9 L846.8 297.1 L861.0 304.5 L874.8 312.9 L888.3 322.5 L901.4 333.0 L913.9 344.5 L926.0 356.9 L937.4 370.2 L948.2 384.3 L958.3 399.2 L967.7 414.7 L976.3 430.8 L984.1 447.5 L991.1 464.7 L997.1 482.3 L1002.3 500.2 L1006.6 518.4 L1009.9 536.7 L1012.3 555.1 L1013.7 573.6 L1014.2 591.9 L1013.6 610.1 L1012.2 628.1 L1009.7 645.8 L1006.3 663.1 L1001.9 680.0 L996.7 696.3 L990.5 712.1 L983.5 727.1 L975.6 741.5 L966.9 755.0 L957.5 767.7 L947.3 779.5 L936.5 790.4 L925.0 800.2 L912.9 809.0 L900.3 816.7 L887.2 823.3 L873.7 828.7 L859.8 833.0 L845.6 836.1 L831.2 838.0 L816.6 838.7 L801.9 838.2 L787.1 836.4 L772.3 833.5 L757.6 829.4" fill="none" stroke="#1a1a1a" stroke-width="0.9"/>
<path d="M594.9 331.0 L606.9 322.0 L619.4 314.1 L632.4 307.3 L645.9 301.6 L659.7 297.2 L673.8 293.8 L688.2 291.7 L702.8 290.8 L717.5 291.1 L732.3 292.7 L747.1 295.4 L761.8 299.3 L776.4 304.4 L790.8 310.6 L805.0 318.0 L818.8 326.4 L832.3 336.0 L845.4 346.5 L857.9 358.0 L870.0 370.4 L881.4 383.7 L892.2 397.8 L902.3 412.7 L911.7 428.2 L920.3 444.3 L928.1 461.0 L935.1 478.2 L941.1 495.8 L946.3 513.7 L950.6 531.9 L953.9 550.2 L956.3 568.6 L957.7 587.1 L958.2 605.4 L957.6 623.6 L956.2 641.6 L953.7 659.3 L950.3 676.6 L945.9 693.5 L940.7 709.8 L934.5 725.6 L927.5 740.6 L919.6 755.0 L910.9 768.5 L901.5 781.2 L891.3 793.0 L880.5 803.9 L869.0 813.7 L856.9 822.5 L844.3 830.2 L831.2 836.8 L817.7 842.2 L803.8 846.5 L789.6 849.6 L775.2 851.5 L760.6 852.2 L745.9 851.7 L731.1 849.9 L716.3 847.0 L701.6 842.9" fill="none" stroke="#1a1a1a" stroke-width="0.9"/>
<ellipse cx="693.0" cy="580.5" rx="232.0" ry="296.0" transform="rotate(-13.00 693.0 580.5)" fill="url(#face)" stroke="#111" stroke-width="1.4"/>
<ellipse cx="693.5" cy="580.4" rx="230.4" ry="294.0" transform="rotate(-12.96 693.5 580.4)" fill="none" stroke="#111" stroke-width="1.1"/>
<ellipse cx="695.6" cy="580.1" rx="223.9" ry="286.0" transform="rotate(-12.80 695.6 580.1)" fill="none" stroke="#111" stroke-width="1.1"/>
<ellipse cx="698.7" cy="579.6" rx="214.2" ry="273.9" transform="rotate(-12.56 698.7 579.6)" fill="none" stroke="#111" stroke-width="1.1"/>
<ellipse cx="701.4" cy="579.1" rx="205.4" ry="263.1" transform="rotate(-12.34 701.4 579.1)" fill="none" stroke="url(#lipsh)" stroke-width="12"/>
<ellipse cx="703.3" cy="578.8" rx="199.6" ry="255.9" transform="rotate(-12.20 703.3 578.8)" fill="url(#cells)" stroke="#111" stroke-width="1.2"/>
<ellipse cx="704.1" cy="578.5" rx="189.5" ry="242.9" transform="rotate(-12.27 704.1 578.5)" fill="none" stroke="#18181c" stroke-width="4.2"/>
<ellipse cx="704.9" cy="578.1" rx="179.3" ry="229.9" transform="rotate(-12.35 704.9 578.1)" fill="none" stroke="#18181c" stroke-width="4.2"/>
<ellipse cx="705.7" cy="577.8" rx="169.2" ry="216.9" transform="rotate(-12.42 705.7 577.8)" fill="none" stroke="#18181c" stroke-width="4.2"/>
<ellipse cx="706.5" cy="577.4" rx="159.0" ry="203.9" transform="rotate(-12.49 706.5 577.4)" fill="none" stroke="#18181c" stroke-width="4.2"/>
<ellipse cx="707.3" cy="577.1" rx="148.9" ry="190.9" transform="rotate(-12.56 707.3 577.1)" fill="none" stroke="#18181c" stroke-width="4.2"/>
<ellipse cx="708.0" cy="576.7" rx="138.7" ry="178.0" transform="rotate(-12.64 708.0 576.7)" fill="none" stroke="#18181c" stroke-width="4.2"/>
<ellipse cx="708.8" cy="576.4" rx="128.6" ry="165.0" transform="rotate(-12.71 708.8 576.4)" fill="none" stroke="#18181c" stroke-width="4.2"/>
<ellipse cx="709.6" cy="576.0" rx="118.4" ry="152.0" transform="rotate(-12.78 709.6 576.0)" fill="none" stroke="#18181c" stroke-width="4.2"/>
<ellipse cx="710.4" cy="575.7" rx="108.3" ry="139.0" transform="rotate(-12.85 710.4 575.7)" fill="none" stroke="#18181c" stroke-width="4.2"/>
<ellipse cx="711.2" cy="575.3" rx="98.1" ry="126.0" transform="rotate(-12.93 711.2 575.3)" fill="none" stroke="#18181c" stroke-width="4.2"/>
<ellipse cx="704.1" cy="578.5" rx="189.5" ry="242.9" transform="rotate(-12.27 704.1 578.5)" fill="none" stroke="#e2e2ea" stroke-width="1.8"/>
<ellipse cx="704.9" cy="578.1" rx="179.3" ry="229.9" transform="rotate(-12.35 704.9 578.1)" fill="none" stroke="#e2e2ea" stroke-width="1.8"/>
<ellipse cx="705.7" cy="577.8" rx="169.2" ry="216.9" transform="rotate(-12.42 705.7 577.8)" fill="none" stroke="#e2e2ea" stroke-width="1.8"/>
<ellipse cx="706.5" cy="577.4" rx="159.0" ry="203.9" transform="rotate(-12.49 706.5 577.4)" fill="none" stroke="#e2e2ea" stroke-width="1.8"/>
<ellipse cx="707.3" cy="577.1" rx="148.9" ry="190.9" transform="rotate(-12.56 707.3 577.1)" fill="none" stroke="#e2e2ea" stroke-width="1.8"/>
<ellipse cx="708.0" cy="576.7" rx="138.7" ry="178.0" transform="rotate(-12.64 708.0 576.7)" fill="none" stroke="#e2e2ea" stroke-width="1.8"/>
<ellipse cx="708.8" cy="576.4" rx="128.6" ry="165.0" transform="rotate(-12.71 708.8 576.4)" fill="none" stroke="#e2e2ea" stroke-width="1.8"/>
<ellipse cx="709.6" cy="576.0" rx="118.4" ry="152.0" transform="rotate(-12.78 709.6 576.0)" fill="none" stroke="#e2e2ea" stroke-width="1.8"/>
<ellipse cx="710.4" cy="575.7" rx="108.3" ry="139.0" transform="rotate(-12.85 710.4 575.7)" fill="none" stroke="#e2e2ea" stroke-width="1.8"/>
<ellipse cx="711.2" cy="575.3" rx="98.1" ry="126.0" transform="rotate(-12.93 711.2 575.3)" fill="none" stroke="#e2e2ea" stroke-width="1.8"/>
<path d="M500.9 548.2 L622.9 552.8 M504.6 504.9 L625.2 536.2 M514.3 463.9 L629.2 521.4 M529.8 426.4 L634.8 508.2 M550.5 393.5 L641.9 496.4 M575.9 366.2 L650.5 485.8 M605.2 345.4 L660.9 476.7 M637.4 331.7 L673.3 469.4 M671.7 325.5 L687.7 464.6 M706.9 327.0 L703.9 463.2 M742.0 336.1 L721.4 465.7 M775.9 352.6 L739.2 472.8 M807.6 376.0 L756.2 484.5 M836.1 405.6 L771.4 500.1 M860.6 440.4 L783.8 518.6 M880.4 479.4 L792.9 538.8 M894.7 521.4 L798.6 559.3 M903.3 565.2 L801.2 579.0 M905.7 609.4 L801.1 597.2 M902.0 652.7 L798.8 613.8 M892.3 693.7 L794.8 628.6 M876.8 731.2 L789.2 641.8 M856.1 764.1 L782.1 653.6 M830.7 791.4 L773.5 664.2 M801.4 812.2 L763.1 673.3 M769.2 825.9 L750.7 680.6 M734.9 832.1 L736.3 685.4 M699.7 830.6 L720.1 686.8 M664.6 821.5 L702.6 684.3 M630.7 805.0 L684.8 677.2 M599.0 781.6 L667.8 665.5 M570.5 752.0 L652.6 649.9 M546.0 717.2 L640.2 631.4 M526.2 678.2 L631.1 611.2 M511.9 636.2 L625.4 590.7 M503.3 592.4 L622.8 571.0" stroke="#111" stroke-width="5.4" fill="none"/>
<path d="M500.9 548.2 L622.9 552.8 M504.6 504.9 L625.2 536.2 M514.3 463.9 L629.2 521.4 M529.8 426.4 L634.8 508.2 M550.5 393.5 L641.9 496.4 M575.9 366.2 L650.5 485.8 M605.2 345.4 L660.9 476.7 M637.4 331.7 L673.3 469.4 M671.7 325.5 L687.7 464.6 M706.9 327.0 L703.9 463.2 M742.0 336.1 L721.4 465.7 M775.9 352.6 L739.2 472.8 M807.6 376.0 L756.2 484.5 M836.1 405.6 L771.4 500.1 M860.6 440.4 L783.8 518.6 M880.4 479.4 L792.9 538.8 M894.7 521.4 L798.6 559.3 M903.3 565.2 L801.2 579.0 M905.7 609.4 L801.1 597.2 M902.0 652.7 L798.8 613.8 M892.3 693.7 L794.8 628.6 M876.8 731.2 L789.2 641.8 M856.1 764.1 L782.1 653.6 M830.7 791.4 L773.5 664.2 M801.4 812.2 L763.1 673.3 M769.2 825.9 L750.7 680.6 M734.9 832.1 L736.3 685.4 M699.7 830.6 L720.1 686.8 M664.6 821.5 L702.6 684.3 M630.7 805.0 L684.8 677.2 M599.0 781.6 L667.8 665.5 M570.5 752.0 L652.6 649.9 M546.0 717.2 L640.2 631.4 M526.2 678.2 L631.1 611.2 M511.9 636.2 L625.4 590.7 M503.3 592.4 L622.8 571.0" stroke="#e6e6ee" stroke-width="3.1" fill="none"/>
<ellipse cx="703.3" cy="578.8" rx="199.6" ry="255.9" transform="rotate(-12.20 703.3 578.8)" fill="none" stroke="#111" stroke-width="1.2"/>
<ellipse cx="713.0" cy="578.5" rx="91.0" ry="116.5" transform="rotate(-13.00 713.0 578.5)" fill="#e4e4ea" stroke="#111" stroke-width="1.1"/>
<ellipse cx="712.0" cy="575.0" rx="88.0" ry="113.0" transform="rotate(-13.00 712.0 575.0)" fill="url(#hub)" stroke="#222" stroke-width="0.9"/>
<ellipse cx="721.0" cy="573.0" rx="67.0" ry="86.0" transform="rotate(-13.00 721.0 573.0)" fill="#dcdce2" stroke="#111" stroke-width="1"/>
<ellipse cx="721.0" cy="573.0" rx="39.5" ry="50.5" transform="rotate(-13.00 721.0 573.0)" fill="#c4c4cc" stroke="#111" stroke-width="1"/>
<ellipse cx="729.0" cy="573.5" rx="31.0" ry="46.0" transform="rotate(-13.00 729.0 573.5)" fill="#a6a6aa" stroke="#111" stroke-width="1"/>
<ellipse cx="694.0" cy="512.0" rx="8.5" ry="11.0" transform="rotate(-13.00 694.0 512.0)" fill="#c4c4cc" stroke="#111" stroke-width="1"/>
<ellipse cx="696.5" cy="512.0" rx="5.0" ry="9.0" transform="rotate(-13.00 696.5 512.0)" fill="#a8a8b0" stroke="#333" stroke-width="0.7"/>
<ellipse cx="756.0" cy="529.0" rx="8.5" ry="11.0" transform="rotate(-13.00 756.0 529.0)" fill="#c4c4cc" stroke="#111" stroke-width="1"/>
<ellipse cx="758.5" cy="529.0" rx="5.0" ry="9.0" transform="rotate(-13.00 758.5 529.0)" fill="#a8a8b0" stroke="#333" stroke-width="0.7"/>
<ellipse cx="769.0" cy="607.0" rx="8.5" ry="11.0" transform="rotate(-13.00 769.0 607.0)" fill="#c4c4cc" stroke="#111" stroke-width="1"/>
<ellipse cx="771.5" cy="607.0" rx="5.0" ry="9.0" transform="rotate(-13.00 771.5 607.0)" fill="#a8a8b0" stroke="#333" stroke-width="0.7"/>
<ellipse cx="716.0" cy="638.0" rx="8.5" ry="11.0" transform="rotate(-13.00 716.0 638.0)" fill="#c4c4cc" stroke="#111" stroke-width="1"/>
<ellipse cx="718.5" cy="638.0" rx="5.0" ry="9.0" transform="rotate(-13.00 718.5 638.0)" fill="#a8a8b0" stroke="#333" stroke-width="0.7"/>
<ellipse cx="670.0" cy="581.0" rx="8.5" ry="11.0" transform="rotate(-13.00 670.0 581.0)" fill="#c4c4cc" stroke="#111" stroke-width="1"/>
<ellipse cx="672.5" cy="581.0" rx="5.0" ry="9.0" transform="rotate(-13.00 672.5 581.0)" fill="#a8a8b0" stroke="#333" stroke-width="0.7"/>
<polygon points="720.5,497 728.8,499.5 729,505 727,505.5 726.5,515.5 718,514 718.5,504 720,503" fill="#000"/><path d="M721 499 L728 503 M719.5 506 L725.5 508.5 M719 510 L724.5 513" stroke="#b8b8c8" stroke-width="0.9" stroke-dasharray="1,1.5"/><path d="M732.5 500 L732.5 518" stroke="#000" stroke-width="2.6"/><path d="M731 506 L735 506" stroke="#000" stroke-width="1.2"/>
<g>
<path d="M306 844.5 L343 853" stroke="#e01010" stroke-width="3"/><polygon points="305,844 319,842 317,851" fill="#d00c0c"/>
<path d="M343 853 L372 847" stroke="#10d010" stroke-width="3"/><polygon points="373,847 361,843 363,852" fill="#0cb80c"/>
<path d="M342.5 853 L340 900" stroke="#1010e8" stroke-width="3"/><polygon points="339.5,902 335.5,888 344,888" fill="#1010e8"/>
<circle cx="342.8" cy="853" r="5" fill="#f4ec10" stroke="#b8a800" stroke-width="0.6"/>
<text x="290" y="846" font-family="Liberation Sans" font-size="13.5" fill="#f01010" stroke="#f01010" stroke-width="0.35">X</text>
<text x="374" y="850" font-family="Liberation Sans" font-size="13.5" fill="#10e010" stroke="#10e010" stroke-width="0.35">Y</text>
<text x="332.5" y="917" font-family="Liberation Sans" font-size="13.5" fill="#1010f0" stroke="#1010f0" stroke-width="0.35">Z</text>
</g>
<rect x="1248.5" y="223.5" width="6" height="6" fill="#eef0ff" stroke="#0a5af0" stroke-width="1.4"/><path d="M1252.5 228 L1252.5 242.5 L1256 239.5 L1258.5 246 L1260.5 245.3 L1258.3 238.8 L1263.5 238.5 Z" fill="#eef4f8" stroke="#3a3a3a" stroke-width="0.5"/>
</g>
<rect x="278" y="144" width="1000" height="775" fill="none" stroke="#d4d0c0" stroke-width="1"/>
</svg><!-- SPLITTERS / PANEL -->
<div class="a" style="left:271px;top:190px;width:1px;height:777px;background:#c0c1c6"></div>
<div class="a" style="left:272px;top:143px;width:1px;height:825px;background:#ccd0d8"></div>
<div class="a" style="left:273px;top:143px;width:4px;height:825px;background:#b8bcc8"></div>
<div class="a" style="left:277px;top:144px;width:1px;height:775px;background:#a8a48e"></div>
<div class="a" style="left:278px;top:919px;width:1002px;height:1px;background:#fbfbf6"></div>
<div class="a" style="left:278px;top:920px;width:1002px;height:4px;background:#9ea2ac"></div>
<div id="panel" class="a"></div>
<div id="phead" class="a"></div>
<div class="a" style="left:283px;top:927px;font-size:12px;font-weight:bold;color:#15428b;white-space:nowrap">Panel výzev</div>
<svg class="a" style="left:1180px;top:926px" width="100" height="16">
 <text x="2" y="14" font-family="Liberation Serif" font-weight="bold" font-size="14" fill="#222">A</text><polygon points="11,3 15,3 13,1" fill="#2a5ab8"/>
 <text x="19" y="14" font-family="Liberation Serif" font-weight="bold" font-size="10" fill="#222">A</text><polygon points="26,4 30,4 28,6" fill="#2a5ab8"/>
 <path d="M36 8 L39 5 L42 8 M36 12 L39 9 L42 12" stroke="#111" stroke-width="1.4" fill="none"/>
 <rect x="52" y="3" width="9" height="2" fill="#15428b"/><polygon points="52,7 61,7 56.5,12" fill="#15428b"/>
 <path d="M70 3 L75 3 M70.5 3 L70.5 9 M74.5 3 L74.5 9 M69 9 L76 9 M72.5 9 L72.5 14" stroke="#15428b" stroke-width="1.3" fill="none"/>
 <path d="M85 4 L92 11 M92 4 L85 11" stroke="#15428b" stroke-width="1.6"/>
</svg>
<!-- STATUS -->
<div id="status" class="a"></div>
<div class="a" style="left:607px;top:974px;font-size:11px;color:#1e1e1e;white-space:nowrap">0 (počet vybraných položek)</div>
<div class="a" style="left:583px;top:969px;width:1px;height:21px;background:#9aa0a8;box-shadow:1px 0 0 #f4f6f8"></div>
<div class="a" style="left:762px;top:969px;width:1px;height:21px;background:#9aa0a8;box-shadow:1px 0 0 #f4f6f8"></div>
<div class="a" style="left:786px;top:969px;width:1px;height:21px;background:#9aa0a8;box-shadow:1px 0 0 #f4f6f8"></div>
<div class="a" style="left:787px;top:968px;width:143px;height:22px;background:#fff;border:1px solid #b8bcc4"></div>
<div class="a" style="left:792px;top:971px;font-size:11px;color:#111;white-space:nowrap">Najít příkaz</div>
<svg class="a" style="left:930px;top:968px" width="350" height="22">
 <path d="M8 15 C 8 9, 12 7, 17 8" stroke="#2a9a2a" stroke-width="2.5" fill="none"/><polygon points="15,4 21,8 15,12" fill="#2a9a2a"/>
 <rect x="31" y="5" width="17" height="13" fill="#eef2fa" stroke="#2a4aa8"/><circle cx="40" cy="11" r="4" fill="none" stroke="#1a3a88" stroke-width="1.5"/>
 <circle cx="63" cy="9" r="5" fill="#d8ecfa" stroke="#3a6ab8" stroke-width="1.2"/><path d="M67 13 L71 17" stroke="#e88a1a" stroke-width="2.5"/>
 <rect x="81" y="5" width="16" height="14" fill="#fff" stroke="#2a3a98"/><path d="M84 8 L94 16 M94 8 L84 16" stroke="#1a2a88" stroke-width="1.2"/>
 <rect x="105" y="4" width="16" height="15" fill="#eaeef6" stroke="#2a3a98"/><ellipse cx="114" cy="13" rx="5" ry="4" fill="#c8b8a0" stroke="#888"/>
 <path d="M131 10 C 131 4, 143 4, 143 10 C 143 16, 131 16, 131 10" stroke="#3aa83a" stroke-width="3" fill="none"/><circle cx="137" cy="10" r="3.5" fill="#cfe8ff" stroke="#4a8ad8"/>
 <polygon points="161,3 168,6 168,15 161,19 154,15 154,6" fill="#2ab0f8" stroke="#1a6ad8"/><polygon points="161,3 168,6 161,10 154,6" fill="#8ad8ff"/>
 <g fill="none" stroke="#3a74d0" stroke-width="0.9"><polygon points="185,4 192,7 192,16 185,19 178,16 178,7"/><path d="M178 7 L185 10 L192 7 M185 10 L185 19"/></g>
 <rect x="199" y="2" width="149" height="19" fill="#e8ecf4" stroke="#b8c4d8"/>
 <line x1="216" y1="11.5" x2="330" y2="11.5" stroke="#a8acb4" stroke-width="2"/><line x1="216" y1="12.5" x2="330" y2="12.5" stroke="#fff"/>
 <circle cx="207.5" cy="11.5" r="8" fill="#f4f6fa" stroke="#6a7a98"/><rect x="203" y="10.5" width="9" height="2" fill="#333"/>
 <circle cx="338.5" cy="11.5" r="8" fill="#f4f6fa" stroke="#6a7a98"/><rect x="334" y="10.5" width="9" height="2" fill="#333"/><rect x="337.5" y="7" width="2" height="9" fill="#333"/>
 <path d="M264 4 L272 4 L272 14 L268 18 L264 14 Z" fill="#f0f2f6" stroke="#7a8aa8"/><line x1="268" y1="7" x2="268" y2="13" stroke="#7a8aa8"/>
</svg>
<!-- TASKBAR -->
<div id="task" class="a"></div>
<div class="a" style="left:0;top:994px;width:97px;height:30px;border-radius:0 12px 0 0;background:linear-gradient(#54a854 0,#3e9a3e 20%,#379337 70%,#2f7f2f 100%);box-shadow:inset -3px 0 4px rgba(0,0,0,0.25)"></div>
<svg class="a" style="left:10px;top:1000px" width="20" height="20"><path d="M2 4 Q6 2 9 4 L8 9 Q5 7 1 9 Z" fill="#f0562a"/><path d="M10 4 Q14 6 18 4 L17 9 Q13 11 9 9 Z" fill="#6ac03a"/><path d="M1 10 Q5 8 8 10 L7 15 Q4 13 0 15 Z" fill="#3a90f0"/><path d="M9 10 Q13 12 17 10 L16 15 Q12 17 8 15 Z" fill="#f8c81a"/></svg>
<div class="a" style="left:35px;top:999px;font-size:18px;font-weight:bold;font-style:italic;color:#fff;white-space:nowrap;text-shadow:1px 1px 1px #1a4a1a">štart</div>
<svg class="a" style="left:100px;top:992px" width="190" height="32">
 <g fill="#0a2a8a"><rect x="7" y="6" width="2" height="2"/><rect x="8" y="10" width="2" height="2"/><rect x="7" y="14" width="2" height="2"/><rect x="8" y="18" width="2" height="2"/><rect x="7" y="22" width="2" height="2"/><rect x="8" y="26" width="2" height="2"/></g>
 <rect x="20" y="7" width="14" height="15" fill="#2a3ac8"/><rect x="23" y="8" width="8" height="5" fill="#e8e8e8"/><rect x="22" y="15" width="10" height="6" fill="#fff"/><rect x="22" y="17" width="10" height="1" fill="#e02a2a"/><rect x="22" y="19" width="10" height="1" fill="#e02a2a"/>
 <rect x="42" y="7" width="15" height="15" fill="#fbe8b8" stroke="#e8901a" stroke-width="1.3"/><circle cx="49.5" cy="14.5" r="5" fill="#fff" stroke="#b8701a"/>
 <ellipse cx="74" cy="15" rx="7" ry="7" fill="#2a8ae8"/><ellipse cx="74" cy="15" rx="4" ry="3" fill="#fff"/><rect x="70" y="15" width="9" height="2" fill="#2a8ae8"/><path d="M66 20 C 70 6, 82 6, 84 8" stroke="#f3c244" stroke-width="1.5" fill="none"/>
 <rect x="88" y="8" width="15" height="15" fill="#fff" stroke="#3a5ab8"/><text x="90" y="20" font-family="Liberation Serif" font-style="italic" font-weight="bold" font-size="12" fill="#2a4ac8">W</text>
 <rect x="111" y="8" width="15" height="15" fill="#fff" stroke="#2a8a3a"/><text x="113" y="20" font-family="Liberation Sans" font-weight="bold" font-size="11" fill="#1a8a2a">X</text>
 <path d="M157 7 L160 10 L157 13 M161 7 L164 10 L161 13" stroke="#cfe0ff" stroke-width="1.2" fill="none"/>
 <g fill="#0a2a8a"><rect x="172" y="6" width="2" height="2"/><rect x="173" y="10" width="2" height="2"/><rect x="172" y="14" width="2" height="2"/><rect x="173" y="18" width="2" height="2"/><rect x="172" y="22" width="2" height="2"/><rect x="173" y="26" width="2" height="2"/></g>
</svg>
<div class="tb" style="left:282px">Doručená pošta - ...</div>
<div class="tb" style="left:425px">Editovať príspevo...</div>
<div class="tb" style="left:568px">13. Metallica - For...</div>
<div class="tb act" style="left:711px">Solid Edge ST3 - S...</div>
<div class="tb" style="left:855px">C:\Documents an...</div>
<div class="tb" style="left:999px">Mpacket_pavucin...</div>
<svg class="a" style="left:282px;top:998px" width="870" height="24">
 <rect x="9" y="3" width="16" height="16" fill="#fbe8b8" stroke="#e8901a" stroke-width="1.3"/><circle cx="17" cy="11" r="5.5" fill="#fff" stroke="#b8701a"/><path d="M17 7 L17 11 L20 11" stroke="#b8701a" fill="none"/>
 <ellipse cx="161" cy="11" rx="7" ry="7" fill="#2a8ae8"/><ellipse cx="161" cy="11" rx="4" ry="3" fill="#fff"/><rect x="157" y="11" width="9" height="2" fill="#2a8ae8"/><path d="M152 17 C 156 2, 170 2, 171 5" stroke="#f3c244" stroke-width="1.5" fill="none"/>
 <polygon points="301,3 312,9 305,11 311,18 298,12 304,10" fill="#f8a020" stroke="#3a2a10" stroke-width="1"/><polygon points="302,5 309,9 304,10" fill="#ffe070"/>
 <polygon points="441,3 449,11 444,13" fill="#b8d8f8"/><polygon points="439,12 456,7 448,20" fill="#3aa0f8"/><polygon points="447,12 455,16 448,20" fill="#e8f4ff"/>
 <path d="M581 6 L588 6 L590 8 L598 8 L598 19 L581 19 Z" fill="#f8d860" stroke="#c8a020"/>
 <path d="M727 6 L733 19 L740 19 L744 6" fill="#e8c8a0" stroke="#8a6a4a"/><path d="M730 2 L733 12 M735 1 L736 12 M741 2 L739 12" stroke="#e03a2a" stroke-width="1.5"/>
</svg>
<g></g>
<svg class="a" style="left:1145px;top:992px" width="135" height="32">
 <g fill="#0a2a8a"><rect x="5" y="6" width="2" height="2"/><rect x="6" y="10" width="2" height="2"/><rect x="5" y="14" width="2" height="2"/><rect x="6" y="18" width="2" height="2"/><rect x="5" y="22" width="2" height="2"/><rect x="6" y="26" width="2" height="2"/></g>
 <rect x="16" y="8" width="14" height="17" fill="#3a6ad8"/>
</svg>
<div class="a" style="left:1187px;top:992px;width:93px;height:32px;background:linear-gradient(#1aa8f0 0,#0e90e2 10%,#0c8ad8 90%,#0a70c0 100%);border-left:1px solid #0a5ab8"></div>
<div class="a" style="left:1161px;top:1002px;font-size:11px;color:#fff;white-space:nowrap">SK</div>
<svg class="a" style="left:1176px;top:996px" width="60" height="26">
 <circle cx="11" cy="12" r="9" fill="#3aa0f0" stroke="#fff" stroke-width="1.5"/><path d="M13 7 L8 12 L13 17" stroke="#fff" stroke-width="2.2" fill="none"/>
 <rect x="23" y="5" width="14" height="9" fill="#fff" stroke="#a86a2a"/><rect x="25" y="12" width="14" height="9" fill="#fff" stroke="#a86a2a"/><rect x="26" y="15" width="12" height="1" fill="#e02a2a"/>
 <rect x="40" y="6" width="10" height="8" fill="#bfe0ff" stroke="#2a5ab8"/><rect x="45" y="11" width="10" height="8" fill="#bfe0ff" stroke="#2a5ab8"/>
</svg>
<div class="a" style="left:1239px;top:1002px;font-size:11px;color:#fff;white-space:nowrap">14:51</div>
</body></html>
